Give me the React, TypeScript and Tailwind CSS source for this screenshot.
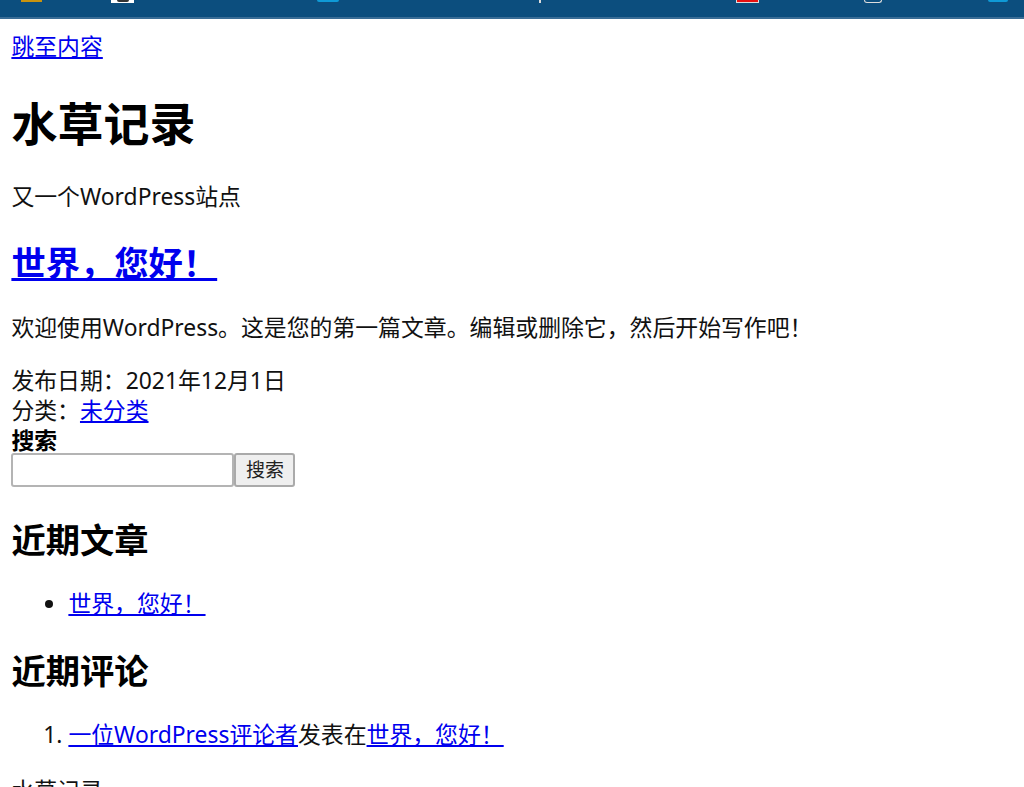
const linkClass = "text-[#0000ee] underline";

function TopBar() {
  return (
    <div className="flex h-[19px] items-start border-b-2 border-[#3a6d96] bg-[#0c4e7e]">
      <div className="ml-[21px] h-[2px] w-[21px] bg-[#c9930f]" />
      <div className="ml-[69px] flex h-[3px] w-[23px] justify-center bg-white">
        <div className="h-[2px] w-[12px] rounded-b-full bg-[#333]" />
      </div>
      <div className="ml-[183px] h-[2px] w-[22px] rounded-b bg-[#0f9ad6]" />
      <div className="ml-[200px] h-[3px] w-[2px] bg-[#ddd]" />
      <div className="ml-[195px] h-[3px] w-[23px] border-x border-b border-[#ddd] bg-[#e81010]" />
      <div className="ml-[105px] h-[3px] w-[18px] rounded-b-[3px] border-x border-b border-[#ddd]" />
      <div className="ml-[106px] h-[2px] w-[20px] rounded-b bg-[#0f9ad6]" />
    </div>
  );
}

export default function App() {
  return (
    <div className="min-h-[787px] overflow-hidden bg-white text-[22.86px] leading-[30px] text-[#111] [font-family:'Noto_Sans','Noto_Sans_CJK_SC',sans-serif]">
      <div className="h-[787px] overflow-hidden">
        <TopBar />
        <div className="px-[11.4px] pt-[13px]">
          <a href="#" className={linkClass}>跳至内容</a>
          <h1 className="mt-[31px] text-[46px] leading-[60px] font-bold text-black">水草记录</h1>
          <p className="mt-[29px]">又一个WordPress站点</p>
          <h2 className="mt-[28px] text-[34.3px] leading-[45px] font-bold">
            <a href="#" className={linkClass}>世界，您好！</a>
          </h2>
          <p className="mt-[28px]">欢迎使用WordPress。这是您的第一篇文章。编辑或删除它，然后开始写作吧！</p>
          <p className="mt-[23px]">发布日期：2021年12月1日</p>
          <p>分类：<a href="#" className={linkClass}>未分类</a></p>
          <form>
            <label className="block font-bold text-black">搜索</label>
            <div className="-mt-[3px] flex">
              <input className="h-[34px] w-[223px] rounded-[3px] border-2 border-[#b4b4b4] bg-white" />
              <button type="button" className="h-[34px] w-[61px] rounded-[3px] border-2 border-[#aaaaaa] bg-[#efefef] text-[19px] leading-[29px] text-[#222]">搜索</button>
            </div>
          </form>
          <h2 className="mt-[30px] text-[34.3px] leading-[45px] font-bold text-black">近期文章</h2>
          <ul className="mt-[27px] list-disc pl-[57px]">
            <li><a href="#" className={linkClass}>世界，您好！</a></li>
          </ul>
          <h2 className="mt-[29px] text-[34.3px] leading-[45px] font-bold text-black">近期评论</h2>
          <ol className="mt-[27px] list-decimal pl-[57px]">
            <li>
              <a href="#" className={linkClass}>一位WordPress评论者</a>发表在<a href="#" className={linkClass}>世界，您好！</a>
            </li>
          </ol>
          <p className="mt-[26px]">水草记录</p>
        </div>
      </div>
    </div>
  );
}
